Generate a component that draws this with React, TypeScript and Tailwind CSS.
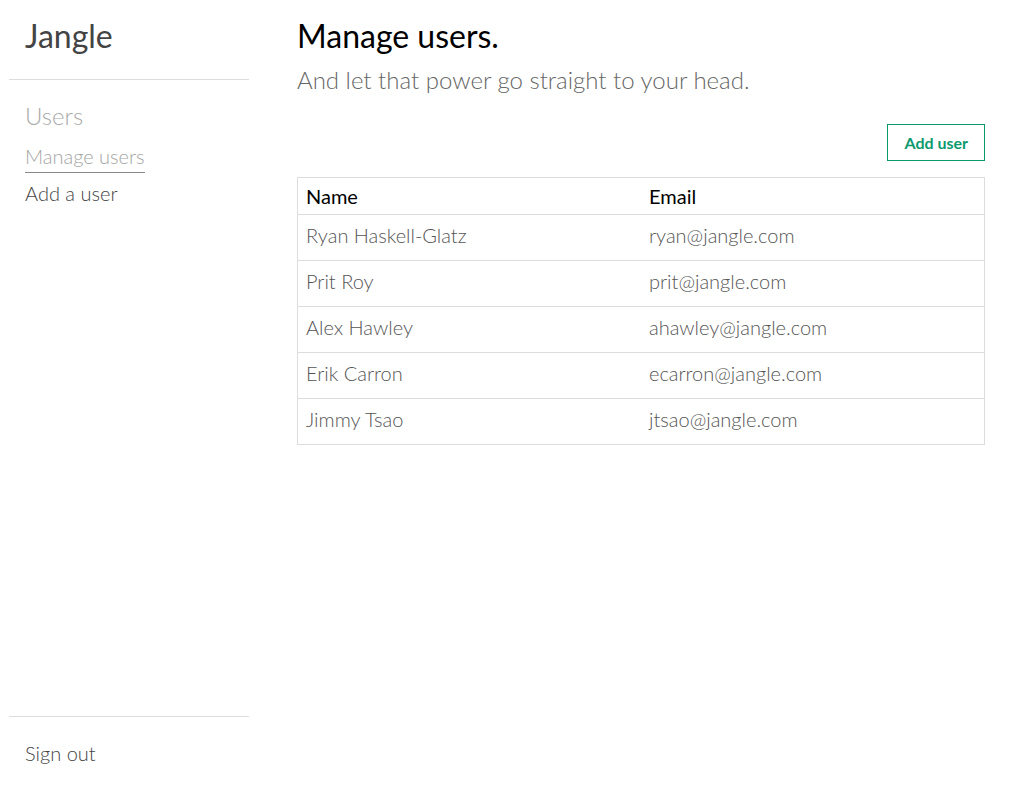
const users = [
  { name: "Ryan Haskell-Glatz", email: "ryan@jangle.com" },
  { name: "Prit Roy", email: "prit@jangle.com" },
  { name: "Alex Hawley", email: "ahawley@jangle.com" },
  { name: "Erik Carron", email: "ecarron@jangle.com" },
  { name: "Jimmy Tsao", email: "jtsao@jangle.com" },
];

// thin body copy
const light = "font-['Lato_Light',Lato,sans-serif] font-light";

export default function App() {
  return (
    <div className="flex h-screen bg-white font-[Lato,'Open_Sans',sans-serif] text-[#333]">
      {/* sidebar */}
      <aside className="ml-[9px] flex w-[240px] shrink-0 flex-col">
        <div className="border-b border-[#ddd] px-4 pb-[19px] pt-[12px]">
          <h1 className="text-[32px] leading-[48px] text-[#444]">Jangle</h1>
        </div>
        <nav className={`flex flex-1 flex-col px-4 pt-[18px] ${light}`}>
          <h2 className="text-[24px] leading-[36px] text-[#aaa]">Users</h2>
          <div className="mt-[7px] flex flex-col items-start">
            <a className="border-b border-[#888] pb-[1px] text-[20px] leading-[30px] text-[#a5a5a5]">
              Manage users
            </a>
            <a className="mt-[5px] text-[20px] leading-[30px] text-[#444]">Add a user</a>
          </div>
        </nav>
        <div className={`border-t border-[#ddd] px-4 pb-[18px] pt-[21px] ${light}`}>
          <a className="text-[20px] leading-[30px] text-[#444]">Sign out</a>
        </div>
      </aside>

      {/* main */}
      <main className="ml-[48px] mr-[37px] flex-1 pt-[12px]">
        <h1 className="text-[32px] leading-[48px] text-black">Manage users.</h1>
        <p className={`mt-[2px] text-[24px] leading-[36px] text-[#666] ${light}`}>
          And let that power go straight to your head.
        </p>
        <div className="mt-[26px] flex justify-end">
          <button className="h-[37px] border border-[#0a9a6e] px-4 text-[16px] font-bold text-[#0a9a6e]">
            Add user
          </button>
        </div>
        <table className="mt-[16px] w-full border-collapse border border-[#ddd] text-left">
          <thead>
            <tr className="h-[37px] border-b border-[#ddd]">
              <th className="w-1/2 px-2 pb-[1px] text-[20px] font-normal text-black">Name</th>
              <th className="px-2 pb-[1px] text-[20px] font-normal text-black">Email</th>
            </tr>
          </thead>
          <tbody className={`text-[#555] ${light}`}>
            {users.map((u) => (
              <tr key={u.email} className="h-[46px] border-b border-[#ddd]">
                <td className="px-2 pb-[5px] text-[20px]">{u.name}</td>
                <td className="px-2 pb-[5px] text-[20px]">{u.email}</td>
              </tr>
            ))}
          </tbody>
        </table>
      </main>
    </div>
  );
}
